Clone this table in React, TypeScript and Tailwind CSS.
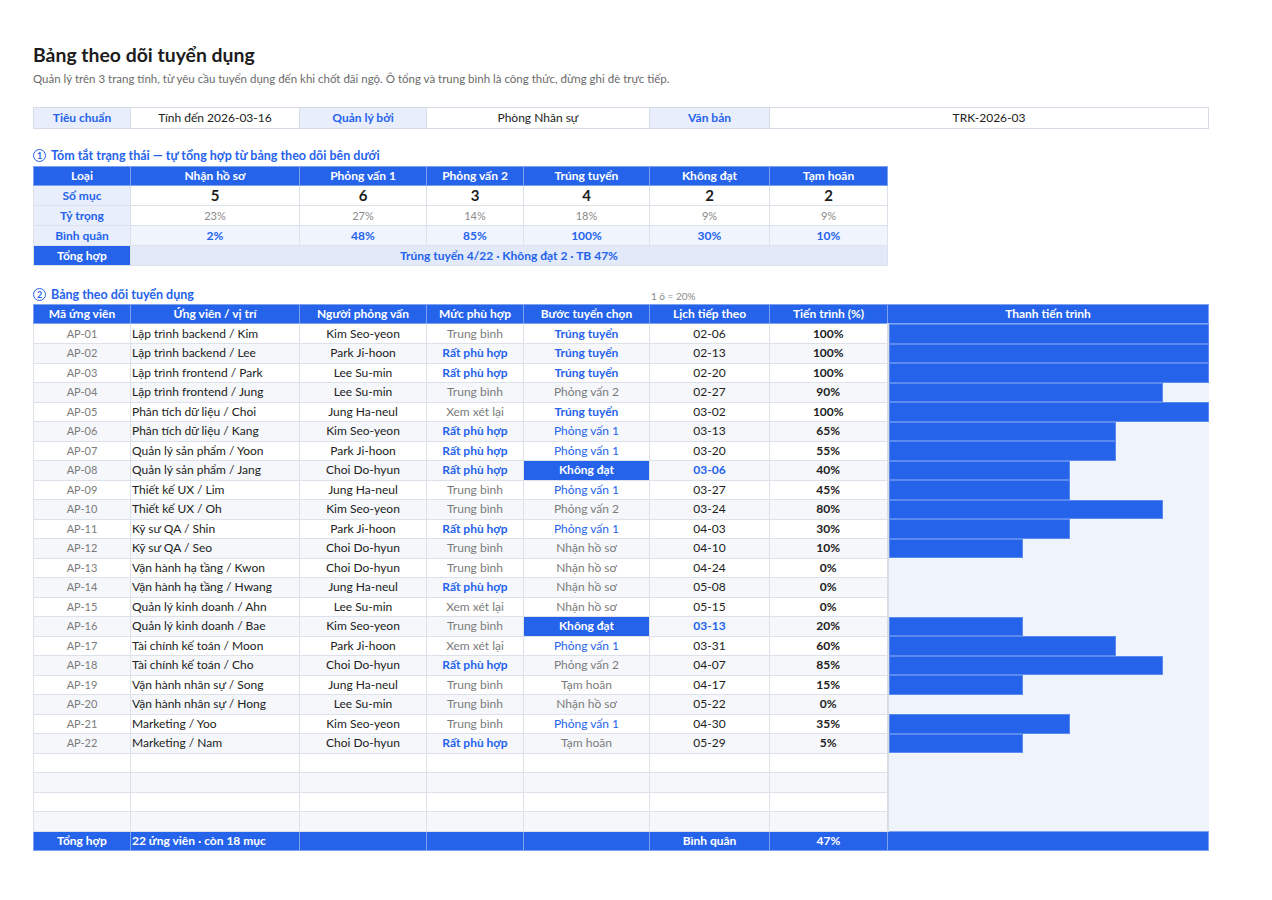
import React from "react";

const BLUE = "bg-[#2563eb]";

type Row = {
  id: string;
  name: string;
  interviewer: string;
  fit: string;
  step: string;
  date: string;
  pct: number;
};

const ROWS: Row[] = [
  { id: "AP-01", name: "Lập trình backend / Kim", interviewer: "Kim Seo-yeon", fit: "Trung bình", step: "Trúng tuyển", date: "02-06", pct: 100 },
  { id: "AP-02", name: "Lập trình backend / Lee", interviewer: "Park Ji-hoon", fit: "Rất phù hợp", step: "Trúng tuyển", date: "02-13", pct: 100 },
  { id: "AP-03", name: "Lập trình frontend / Park", interviewer: "Lee Su-min", fit: "Rất phù hợp", step: "Trúng tuyển", date: "02-20", pct: 100 },
  { id: "AP-04", name: "Lập trình frontend / Jung", interviewer: "Lee Su-min", fit: "Trung bình", step: "Phỏng vấn 2", date: "02-27", pct: 90 },
  { id: "AP-05", name: "Phân tích dữ liệu / Choi", interviewer: "Jung Ha-neul", fit: "Xem xét lại", step: "Trúng tuyển", date: "03-02", pct: 100 },
  { id: "AP-06", name: "Phân tích dữ liệu / Kang", interviewer: "Kim Seo-yeon", fit: "Rất phù hợp", step: "Phỏng vấn 1", date: "03-13", pct: 65 },
  { id: "AP-07", name: "Quản lý sản phẩm / Yoon", interviewer: "Park Ji-hoon", fit: "Rất phù hợp", step: "Phỏng vấn 1", date: "03-20", pct: 55 },
  { id: "AP-08", name: "Quản lý sản phẩm / Jang", interviewer: "Choi Do-hyun", fit: "Rất phù hợp", step: "Không đạt", date: "03-06", pct: 40 },
  { id: "AP-09", name: "Thiết kế UX / Lim", interviewer: "Jung Ha-neul", fit: "Trung bình", step: "Phỏng vấn 1", date: "03-27", pct: 45 },
  { id: "AP-10", name: "Thiết kế UX / Oh", interviewer: "Kim Seo-yeon", fit: "Trung bình", step: "Phỏng vấn 2", date: "03-24", pct: 80 },
  { id: "AP-11", name: "Kỹ sư QA / Shin", interviewer: "Park Ji-hoon", fit: "Rất phù hợp", step: "Phỏng vấn 1", date: "04-03", pct: 30 },
  { id: "AP-12", name: "Kỹ sư QA / Seo", interviewer: "Choi Do-hyun", fit: "Trung bình", step: "Nhận hồ sơ", date: "04-10", pct: 10 },
  { id: "AP-13", name: "Vận hành hạ tầng / Kwon", interviewer: "Choi Do-hyun", fit: "Trung bình", step: "Nhận hồ sơ", date: "04-24", pct: 0 },
  { id: "AP-14", name: "Vận hành hạ tầng / Hwang", interviewer: "Jung Ha-neul", fit: "Rất phù hợp", step: "Nhận hồ sơ", date: "05-08", pct: 0 },
  { id: "AP-15", name: "Quản lý kinh doanh / Ahn", interviewer: "Lee Su-min", fit: "Xem xét lại", step: "Nhận hồ sơ", date: "05-15", pct: 0 },
  { id: "AP-16", name: "Quản lý kinh doanh / Bae", interviewer: "Kim Seo-yeon", fit: "Trung bình", step: "Không đạt", date: "03-13", pct: 20 },
  { id: "AP-17", name: "Tài chính kế toán / Moon", interviewer: "Park Ji-hoon", fit: "Xem xét lại", step: "Phỏng vấn 1", date: "03-31", pct: 60 },
  { id: "AP-18", name: "Tài chính kế toán / Cho", interviewer: "Choi Do-hyun", fit: "Rất phù hợp", step: "Phỏng vấn 2", date: "04-07", pct: 85 },
  { id: "AP-19", name: "Vận hành nhân sự / Song", interviewer: "Jung Ha-neul", fit: "Trung bình", step: "Tạm hoãn", date: "04-17", pct: 15 },
  { id: "AP-20", name: "Vận hành nhân sự / Hong", interviewer: "Lee Su-min", fit: "Trung bình", step: "Nhận hồ sơ", date: "05-22", pct: 0 },
  { id: "AP-21", name: "Marketing / Yoo", interviewer: "Kim Seo-yeon", fit: "Trung bình", step: "Phỏng vấn 1", date: "04-30", pct: 35 },
  { id: "AP-22", name: "Marketing / Nam", interviewer: "Choi Do-hyun", fit: "Rất phù hợp", step: "Tạm hoãn", date: "05-29", pct: 5 },
];

const SUMMARY = [
  { label: "Nhận hồ sơ", count: 5, share: "23%", avg: "2%" },
  { label: "Phỏng vấn 1", count: 6, share: "27%", avg: "48%" },
  { label: "Phỏng vấn 2", count: 3, share: "14%", avg: "85%" },
  { label: "Trúng tuyển", count: 4, share: "18%", avg: "100%" },
  { label: "Không đạt", count: 2, share: "9%", avg: "30%" },
  { label: "Tạm hoãn", count: 2, share: "9%", avg: "10%" },
];

const COLS = [97, 169, 127, 97, 126, 120, 118, 321];

// bar is drawn in 5 steps of the 321px cell
function barWidth(pct: number) {
  if (pct <= 0) return 0;
  if (pct <= 20) return 134;
  if (pct <= 45) return 181;
  if (pct <= 65) return 227;
  if (pct < 100) return 274;
  return 321;
}

const cell = "h-[19.5px] p-0 border border-[#dde2ea] text-center align-middle leading-[16px]";
const sCell = "h-[20px] p-0 border border-[#dde2ea] text-center align-middle leading-none";
const head = "h-[19px] p-0 border border-[#7fa2f0] text-center align-middle text-white font-bold text-[12px] leading-[16px]";

function Circled({ n }: { n: string }) {
  return (
    <span className="inline-flex h-[13px] w-[13px] items-center justify-center rounded-full border border-[#2563eb] text-[9px] leading-none font-bold mr-[5px]">
      {n}
    </span>
  );
}

function fitClass(fit: string) {
  return fit === "Rất phù hợp" ? "text-[#2563eb] font-bold" : "text-[#7b7b7b]";
}

function stepClass(step: string) {
  if (step === "Trúng tuyển") return "text-[#2563eb] font-bold";
  if (step === "Phỏng vấn 1") return "text-[#2563eb]";
  if (step === "Không đạt") return "bg-[#2563eb] text-white font-bold";
  return "text-[#7b7b7b]";
}

export default function App() {
  return (
    <div className="min-h-[900px] bg-white px-[33px] pt-[43px] text-[#222] font-['Lato','Noto_Sans',sans-serif]">
      <h1 className="text-[19.4px] font-bold leading-[24px] text-[#1c1c1c]">Bảng theo dõi tuyển dụng</h1>
      <p className="mt-[5px] text-[11.5px] leading-[14px] text-[#6b6b6b]">
        Quản lý trên 3 trang tính, từ yêu cầu tuyển dụng đến khi chốt đãi ngộ. Ô tổng và trung bình là công thức, đừng ghi đè trực tiếp.
      </p>

      {/* meta row */}
      <table className="mt-[21px] w-[1175px] table-fixed border-collapse text-[12px]">
        <colgroup>
          {[97, 169, 127, 223, 120, 439].map((w, i) => (
            <col key={i} style={{ width: w }} />
          ))}
        </colgroup>
        <tbody>
          <tr>
            <td className="h-[21px] p-0 border border-[#d6dce6] bg-[#e8eefb] text-center font-bold text-[#2563eb]">Tiêu chuẩn</td>
            <td className="h-[21px] p-0 border border-[#d6dce6] text-center">Tính đến 2026-03-16</td>
            <td className="h-[21px] p-0 border border-[#d6dce6] bg-[#e8eefb] text-center font-bold text-[#2563eb]">Quản lý bởi</td>
            <td className="h-[21px] p-0 border border-[#d6dce6] text-center">Phòng Nhân sự</td>
            <td className="h-[21px] p-0 border border-[#d6dce6] bg-[#e8eefb] text-center font-bold text-[#2563eb]">Văn bản</td>
            <td className="h-[21px] p-0 border border-[#d6dce6] text-center">TRK-2026-03</td>
          </tr>
        </tbody>
      </table>

      {/* summary */}
      <div className="mt-[18px] flex items-center text-[12.5px] font-bold leading-[17px] text-[#2563eb]">
        <Circled n="1" />
        Tóm tắt trạng thái — tự tổng hợp từ bảng theo dõi bên dưới
      </div>
      <table className="mt-[2px] w-[854px] table-fixed border-collapse text-[12px]">
        <colgroup>
          {COLS.slice(0, 7).map((w, i) => (
            <col key={i} style={{ width: w }} />
          ))}
        </colgroup>
        <tbody>
          <tr className={BLUE}>
            <td className={head}>Loại</td>
            {SUMMARY.map((s) => (
              <td key={s.label} className={head}>{s.label}</td>
            ))}
          </tr>
          <tr>
            <td className={`${sCell} bg-[#e8eefb] font-bold text-[#2563eb]`}>Số mục</td>
            {SUMMARY.map((s) => (
              <td key={s.label} className={`${sCell} text-[15px] font-bold text-[#1c1c1c]`}>{s.count}</td>
            ))}
          </tr>
          <tr>
            <td className={`${sCell} bg-[#e8eefb] font-bold text-[#2563eb]`}>Tỷ trọng</td>
            {SUMMARY.map((s) => (
              <td key={s.label} className={`${sCell} text-[11px] text-[#8a8a8a]`}>{s.share}</td>
            ))}
          </tr>
          <tr className="bg-[#eff4fd]">
            <td className={`${sCell} bg-[#e8eefb] font-bold text-[#2563eb]`}>Bình quân</td>
            {SUMMARY.map((s) => (
              <td key={s.label} className={`${sCell} font-bold text-[#2563eb]`}>{s.avg}</td>
            ))}
          </tr>
          <tr>
            <td className={`${sCell} bg-[#2563eb] font-bold text-white`}>Tổng hợp</td>
            <td colSpan={6} className={`${sCell} bg-[#e2e9f9] font-bold text-[#2563eb]`}>
              Trúng tuyển 4/22 · Không đạt 2 · TB 47%
            </td>
          </tr>
        </tbody>
      </table>

      {/* tracker */}
      <div className="mt-[20px] flex items-end">
        <div className="flex w-[618px] items-center text-[12.5px] font-bold leading-[17px] text-[#2563eb]">
          <Circled n="2" />
          Bảng theo dõi tuyển dụng
        </div>
        <div className="text-[10px] leading-[14px] text-[#8a8a8a]">1 ô = 20%</div>
      </div>
      <table className="mt-[1px] w-[1175px] table-fixed border-collapse text-[12px]">
        <colgroup>
          {COLS.map((w, i) => (
            <col key={i} style={{ width: w }} />
          ))}
        </colgroup>
        <tbody>
          <tr className={BLUE}>
            {["Mã ứng viên", "Ứng viên / vị trí", "Người phỏng vấn", "Mức phù hợp", "Bước tuyển chọn", "Lịch tiếp theo", "Tiến trình (%)", "Thanh tiến trình"].map((h) => (
              <td key={h} className={head}>{h}</td>
            ))}
          </tr>
          {ROWS.map((r, i) => {
            const bg = i % 2 === 1 ? "bg-[#f5f7fb]" : "bg-white";
            const failed = r.step === "Không đạt";
            return (
              <tr key={r.id} className={bg}>
                <td className={`${cell} text-[11px] text-[#7b7b7b]`}>{r.id}</td>
                <td className={`${cell} text-left pl-[1px] text-[#222]`}>{r.name}</td>
                <td className={cell}>{r.interviewer}</td>
                <td className={`${cell} ${fitClass(r.fit)}`}>{r.fit}</td>
                <td className={`${cell} ${stepClass(r.step)}`}>{r.step}</td>
                <td className={`${cell} ${failed ? "font-bold text-[#2563eb]" : ""}`}>{r.date}</td>
                <td className={`${cell} font-bold`}>{r.pct}%</td>
                <td className="h-[19.5px] p-0 border-l-2 border-l-[#d8dce4] bg-[#eef3fc] align-middle">
                  <div className="flex h-[19.5px]">
                    {r.pct > 0 && (
                      <div
                        className="h-full border border-[#5b8bf0] bg-[#2563eb]"
                        style={{ width: barWidth(r.pct) }}
                      />
                    )}
                  </div>
                </td>
              </tr>
            );
          })}
          {[0, 1, 2, 3].map((k) => (
            <tr key={k} className={k % 2 === 1 ? "bg-[#f5f7fb]" : "bg-white"}>
              {COLS.slice(0, 7).map((_, j) => (
                <td key={j} className={cell} />
              ))}
              <td className="h-[19.5px] p-0 border-l-2 border-l-[#d8dce4] bg-[#eef3fc]" />
            </tr>
          ))}
          <tr className={`${BLUE} text-white font-bold`}>
            <td className={head}>Tổng hợp</td>
            <td className={`${head} text-left pl-[1px]`}>22 ứng viên · còn 18 mục</td>
            <td className={head} />
            <td className={head} />
            <td className={head} />
            <td className={head}>Bình quân</td>
            <td className={head}>47%</td>
            <td className={head} />
          </tr>
        </tbody>
      </table>
    </div>
  );
}
